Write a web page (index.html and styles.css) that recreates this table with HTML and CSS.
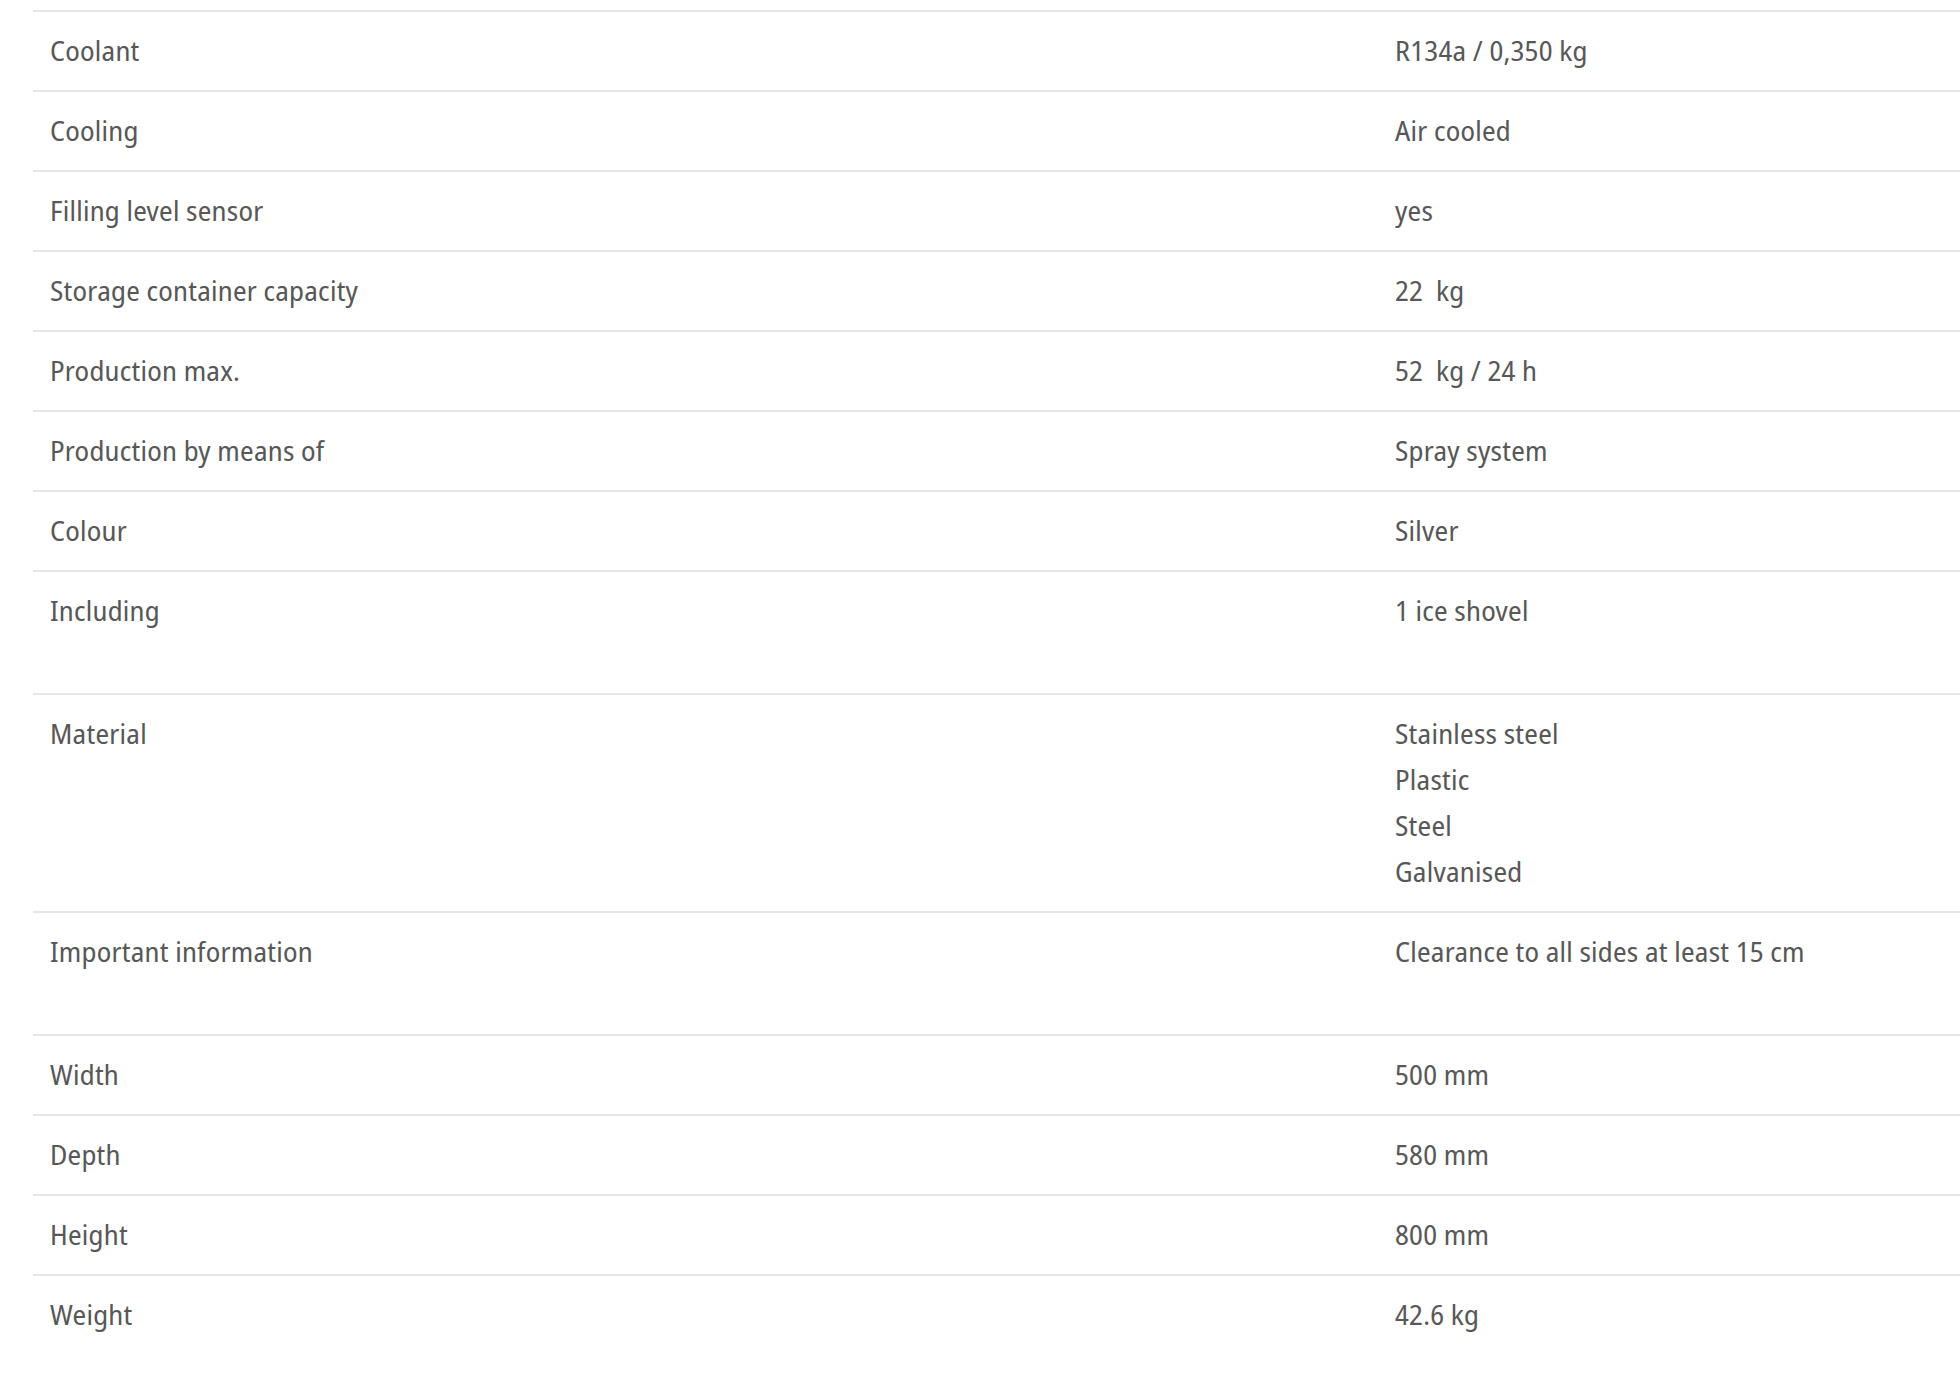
FILE: index.html
```html
<!DOCTYPE html>
<html lang="en">
<head>
    <meta charset="UTF-8">
    <meta name="viewport" content="width=device-width, initial-scale=1.0">
    <title>Ice cube maker - Technical data</title>
    <link rel="stylesheet" href="styles.css">
</head>
<body>
    <div class="specs">
        <div class="spec-row">
            <div class="spec-label">Coolant</div>
            <div class="spec-value">R134a / 0,350 kg</div>
        </div>
        <div class="spec-row">
            <div class="spec-label">Cooling</div>
            <div class="spec-value">Air cooled</div>
        </div>
        <div class="spec-row">
            <div class="spec-label">Filling level sensor</div>
            <div class="spec-value">yes</div>
        </div>
        <div class="spec-row">
            <div class="spec-label">Storage container capacity</div>
            <div class="spec-value">22&nbsp; kg</div>
        </div>
        <div class="spec-row">
            <div class="spec-label">Production max.</div>
            <div class="spec-value">52&nbsp; kg / 24 h</div>
        </div>
        <div class="spec-row">
            <div class="spec-label">Production by means of</div>
            <div class="spec-value">Spray system</div>
        </div>
        <div class="spec-row">
            <div class="spec-label">Colour</div>
            <div class="spec-value">Silver</div>
        </div>
        <!-- Lieferumfang -->
        <div class="spec-row spec-row--note">
            <div class="spec-label">Including</div>
            <div class="spec-value">1 ice shovel</div>
        </div>
        <div class="spec-row">
            <div class="spec-label">Material</div>
            <div class="spec-value">
                Stainless steel<br>
                Plastic<br>
                Steel<br>
                Galvanised
            </div>
        </div>
        <div class="spec-row spec-row--note">
            <div class="spec-label">Important information</div>
            <div class="spec-value">Clearance to all sides at least 15 cm</div>
        </div>
        <!-- Abmessungen -->
        <div class="spec-row">
            <div class="spec-label">Width</div>
            <div class="spec-value">500 mm</div>
        </div>
        <div class="spec-row">
            <div class="spec-label">Depth</div>
            <div class="spec-value">580 mm</div>
        </div>
        <div class="spec-row">
            <div class="spec-label">Height</div>
            <div class="spec-value">800 mm</div>
        </div>
        <div class="spec-row">
            <div class="spec-label">Weight</div>
            <div class="spec-value">42.6 kg</div>
        </div>
    </div>
</body>
</html>
```
FILE: styles.css
```css
body {
    margin: 0;
    padding: 0;
    background-color: #ffffff;
    font-family: "Noto Sans Display", "Open Sans", Arial, sans-serif;
    font-stretch: condensed;
    color: #585858;
    overflow: hidden;
}
/* Technische Daten */
.specs {
    padding: 10px 0 0 33px;
}
.spec-row {
    display: grid;
    grid-template-columns: 1345px 1fr;
    border-top: 2px solid #e6e6e6;
}
.spec-label,
.spec-value {
    padding: 15px 17px 17px;
    font-size: 28px;
    line-height: 46px;
    letter-spacing: 0.25px;
}
.spec-row--note .spec-value,
.spec-row--note .spec-label {
    padding-bottom: 60px;
}
```
